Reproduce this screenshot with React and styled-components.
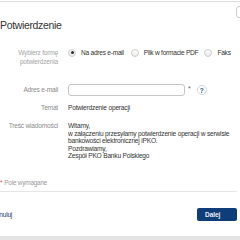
import React, { useState } from 'react';
import styled, { createGlobalStyle } from 'styled-components';

const GlobalStyle = createGlobalStyle`
html, body {
  margin: 0;
  padding: 0;
  background: #ffffff;
  overflow: hidden;
}
body {
  font-family: "Liberation Sans", Arial, sans-serif;
  color: #3c3c3c;
}
`;

const Page = styled.div`
width: 240px;
height: 240px;
display: flex;
flex-direction: column;
overflow: hidden;
`;

const Dialog = styled.div`
margin: 1px 0 0 -8px;
width: 260px;
padding: 0 15px 0 8px;
background: #fff;
border-top: 1px solid #dedede;
display: flex;
flex-direction: column;
height: 235px;
box-sizing: border-box;
flex-shrink: 0;
`;

const Backdrop = styled.div`
flex: 1;
background: #e4e4e4;
`;

const Header = styled.div`
display: flex;
flex-direction: column;
`;

const CloseButton = styled.div`
align-self: flex-end;
margin: 4px -11px 0 0;
width: 12px;
height: 12px;
border: 1px solid #cccccc;
border-radius: 3px;
box-sizing: border-box;
`;

const Title = styled.h1`
margin: 0;
font-size: 10.5px;
letter-spacing: -0.35px;
line-height: 14px;
font-weight: 400;
color: #333;
`;

const Form = styled.div`
margin-top: 16px;
display: flex;
flex-direction: column;
`;

const Field = styled.div`
display: grid;
grid-template-columns: 58px 1fr;
column-gap: 10px;
align-items: ${p => p.$align || 'start'};
margin-top: ${p => p.$top || 0}px;
`;

const Label = styled.div`
text-align: right;
font-size: 6.6px;
letter-spacing: -0.2px;
white-space: nowrap;
line-height: ${p => p.$lh || 9}px;
color: ${p => p.$light ? '#a6a6a6' : '#8c8c8c'};
`;

const Radios = styled.div`
display: flex;
align-items: center;
height: 9px;
`;

const RadioOption = styled.label`
display: flex;
align-items: center;
gap: 5px;
margin-right: ${p => p.$space}px;
font-size: 6.6px;
letter-spacing: -0.25px;
line-height: 9px;
color: #333;
white-space: nowrap;
cursor: pointer;
`;

const RadioCircle = styled.span`
width: 8px;
height: 8px;
border-radius: 50%;
border: 1px solid #cdcdcd;
background: linear-gradient(#ffffff, #ececec);
box-sizing: border-box;
display: flex;
align-items: center;
justify-content: center;
flex-shrink: 0;
&::after {
  content: '';
  width: 3px;
  height: 3px;
  border-radius: 50%;
  background: ${p => p.$checked ? '#2b2b2b' : 'transparent'};
}
`;

const InputRow = styled.div`
display: flex;
align-items: center;
`;

const Input = styled.input`
width: 117px;
height: 12px;
box-sizing: border-box;
border: 1px solid #c6c6c6;
border-radius: 3px;
padding: 0 3px;
font-size: 7px;
outline: none;
`;

const Required = styled.span`
margin-left: 3px;
font-size: 7px;
line-height: 7px;
color: #666;
align-self: flex-start;
margin-top: 1px;
`;

const Help = styled.span`
margin-left: 6px;
width: 10px;
height: 10px;
border-radius: 50%;
border: 1px solid #c9d6e3;
box-sizing: border-box;
display: flex;
align-items: center;
justify-content: center;
font-size: 6.5px;
font-weight: 700;
color: #2d4d7c;
`;

const Value = styled.div`
font-size: 6.6px;
letter-spacing: -0.2px;
line-height: ${p => p.$lh || 9}px;
color: #333;
white-space: nowrap;
`;

const Note = styled.div`
margin-top: 18px;
padding-bottom: 4px;
border-bottom: 1px solid #e6e6e6;
font-size: 6.4px;
letter-spacing: -0.2px;
line-height: 9px;
color: #9a9a9a;
`;

const Star = styled.span`
color: #d9534f;
margin-right: 2px;
`;

const Footer = styled.div`
display: flex;
align-items: center;
justify-content: space-between;
padding-top: 16px;
`;

const CancelLink = styled.a`
margin-left: -5px;
font-size: 6.6px;
letter-spacing: -0.2px;
line-height: 9px;
color: #1d3b72;
text-decoration: none;
cursor: pointer;
`;

const NextButton = styled.button`
width: 40px;
height: 13px;
border: none;
border-radius: 2px;
background: #0f3d78;
color: #e8eef7;
font-family: inherit;
font-size: 6.6px;
letter-spacing: -0.1px;
font-weight: 700;
text-align: left;
padding: 0 0 0 8px;
cursor: pointer;
`;

const App = () => {
    const [method, setMethod] = useState('email')
    const options = [
        { id: 'email', label: 'Na adres e-mail', space: 7 },
        { id: 'pdf', label: 'Plik w formacie PDF', space: 6 },
        { id: 'fax', label: 'Faks', space: 0 },
    ]

    return (
        <Page>
            <GlobalStyle />
            <Dialog>
                <Header>
                    <CloseButton />
                    <Title>Potwierdzenie</Title>
                </Header>
                <Form>
                    <Field>
                        <Label $light>Wybierz formę<br />potwierdzenia</Label>
                        <Radios>
                            {options.map(o => (
                                <RadioOption key={o.id} $space={o.space} onClick={() => setMethod(o.id)}>
                                    <RadioCircle $checked={method === o.id} />
                                    {o.label}
                                </RadioOption>
                            ))}
                        </Radios>
                    </Field>
                    <Field $top={18} $align="center">
                        <Label $lh={12}>Adres e-mail</Label>
                        <InputRow>
                            <Input type="text" />
                            <Required>*</Required>
                            <Help>?</Help>
                        </InputRow>
                    </Field>
                    <Field $top={7}>
                        <Label>Temat</Label>
                        <Value>Potwierdzenie operacji</Value>
                    </Field>
                    <Field $top={10}>
                        <Label $lh={7.5}>Treść wiadomości</Label>
                        <Value $lh={7.5}>
                            Witamy,<br />
                            w załączeniu przesyłamy potwierdzenie operacji w serwisie<br />
                            bankowości elektronicznej iPKO.<br />
                            Pozdrawiamy,<br />
                            Zespół PKO Banku Polskiego
                        </Value>
                    </Field>
                </Form>
                <Note><Star>*</Star>Pole wymagane</Note>
                <Footer>
                    <CancelLink>Anuluj</CancelLink>
                    <NextButton>Dalej</NextButton>
                </Footer>
            </Dialog>
            <Backdrop />
        </Page>
    );
};

export default App;
